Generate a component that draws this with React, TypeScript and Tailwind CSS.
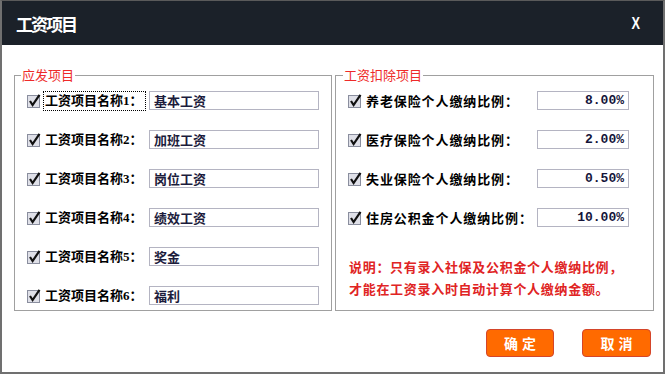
import React from "react";

const CJK = '"Liberation Serif", "Noto Sans CJK SC", sans-serif';
const SANS = '"Noto Sans CJK SC", "Liberation Sans", sans-serif';

function Check() {
  return (
    <svg width="14" height="14" viewBox="0 0 14 14" className="shrink-0">
      <rect x="0.5" y="1.5" width="12" height="12" fill="#dfe0e8" stroke="#8a8e9e" />
      <path d="M3 7 L5.6 11 L12.5 0.8" stroke="#111" strokeWidth="2.2" fill="none" />
    </svg>
  );
}

const leftItems = ["基本工资", "加班工资", "岗位工资", "绩效工资", "奖金", "福利"];
const rightItems = [
  ["养老保险个人缴纳比例：", "8.00%"],
  ["医疗保险个人缴纳比例：", "2.00%"],
  ["失业保险个人缴纳比例：", "0.50%"],
  ["住房公积金个人缴纳比例：", "10.00%"],
];

export default function App() {
  return (
    <div
      className="w-[665px] h-[374px] flex flex-col bg-white border-x-2 border-b-2 border-t border-[#707070] border-t-[#5a5a5a]"
      style={{ fontFamily: SANS }}
    >
      <div className="h-[44px] shrink-0 bg-[#1b2129] flex items-center justify-between pl-[14px] pr-[22px]">
        <span className="text-white font-bold text-[17px] tracking-[-2px] leading-none">工资项目</span>
        <span className="text-white text-[17px] font-bold leading-none scale-x-75" style={{ fontFamily: '"Liberation Sans", sans-serif' }}>
          X
        </span>
      </div>

      <div className="flex gap-[3px] pl-[12px] mt-[30px]">
        {/* left group */}
        <div className="relative w-[318px] h-[236px] border border-[#a0a0a0] pl-[12px] pr-[12px] pt-[15px] flex flex-col gap-[20px]">
          <span className="absolute -top-[9px] left-[6px] bg-white px-[1px] text-[13px] leading-[16px] text-[#ee2a2a]">
            应发项目
          </span>
          {leftItems.map((v, i) => (
            <div key={i} className="flex items-center h-[19px]">
              <Check />
              <div
                className={
                  "ml-[2px] w-[103px] h-[20px] flex items-center pl-[1px] text-[13px] font-bold text-black leading-none whitespace-nowrap border " +
                  (i === 0 ? "border-dotted border-black" : "border-transparent")
                }
                style={{ fontFamily: CJK }}
              >
                工资项目名称{i + 1}：
              </div>
              <div className="ml-[3px] w-[170px] h-[19px] border border-[#b4b4c2] flex items-center pl-[4px] text-[13px] font-bold text-[#1c1c3c] leading-none">
                {v}
              </div>
            </div>
          ))}
        </div>

        {/* right group */}
        <div className="relative w-[319px] h-[236px] border border-[#a0a0a0] pl-[12px] pr-[24px] pt-[15px] flex flex-col">
          <span className="absolute -top-[9px] left-[7px] bg-white px-[1px] text-[13px] leading-[16px] text-[#ee2a2a]">
            工资扣除项目
          </span>
          <div className="flex flex-col gap-[20px]">
            {rightItems.map(([l, v], i) => (
              <div key={i} className="flex items-center h-[19px]">
                <Check />
                <div className="ml-[4px] flex-1 text-[13px] font-bold text-black leading-none tracking-[0.9px] whitespace-nowrap">
                  {l}
                </div>
                <div
                  className="w-[92px] h-[19px] border border-[#b4b4c2] flex items-center justify-end pr-[4px] text-[13px] font-bold text-[#14143a] leading-none"
                  style={{ fontFamily: '"Liberation Mono", monospace' }}
                >
                  {v}
                </div>
              </div>
            ))}
          </div>
          <div className="mt-[29px] pl-[1px] text-[13px] font-bold leading-[22px] text-[#e02424] tracking-[0.7px] whitespace-nowrap">
            <div>说明：只有录入社保及公积金个人缴纳比例，</div>
            <div>才能在工资录入时自动计算个人缴纳金额。</div>
          </div>
        </div>
      </div>

      <div className="flex justify-end gap-[28px] pr-[12px] mt-[18px]">
        <button className="w-[68px] h-[28px] rounded-[4px] bg-[#ff6a00] border border-[#d4452a] text-white font-bold text-[14px] tracking-[4px] pl-[4px] leading-none">
          确定
        </button>
        <button className="w-[69px] h-[28px] rounded-[4px] bg-[#ff6a00] border border-[#d4452a] text-white font-bold text-[14px] tracking-[4px] pl-[4px] leading-none">
          取消
        </button>
      </div>
    </div>
  );
}
